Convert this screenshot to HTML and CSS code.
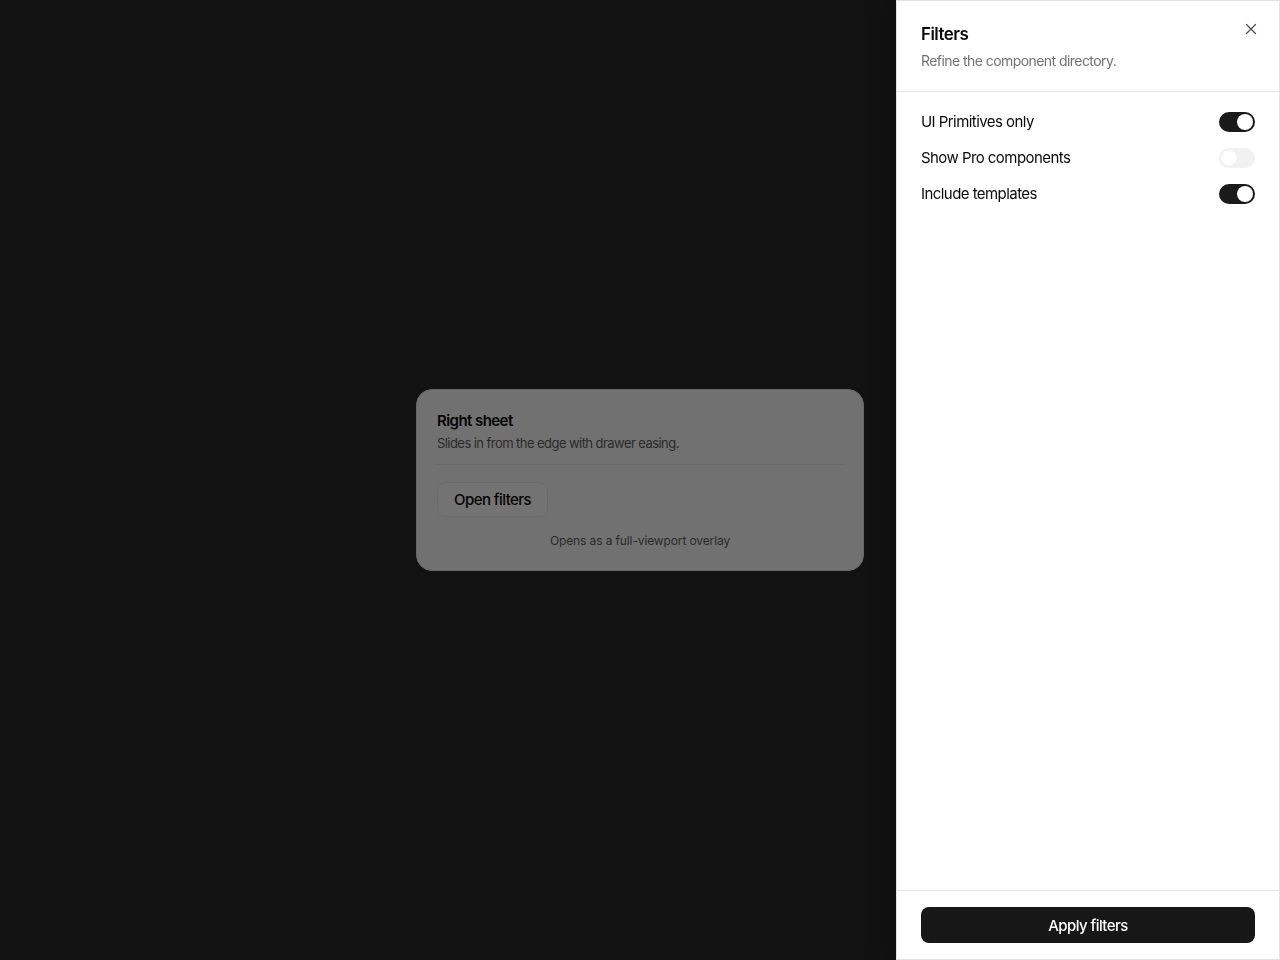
FILE: index.html
```html
<!DOCTYPE html>
<html lang="en">
<head>
<meta charset="utf-8">
<title>Right sheet</title>
<link rel="stylesheet" href="styles.css">
</head>
<body>
<main class="page">
  <section class="card">
    <h2 class="card-title">Right sheet</h2>
    <p class="card-desc">Slides in from the edge with drawer easing.</p>
    <hr class="card-sep">
    <button class="btn-outline" type="button">Open filters</button>
    <p class="card-note">Opens as a full-viewport overlay</p>
  </section>
</main>
<div class="overlay"></div>
<aside class="sheet">
  <header class="sheet-header">
    <h1 class="sheet-title">Filters</h1>
    <p class="sheet-desc">Refine the component directory.</p>
    <button class="close" type="button" aria-label="Close">
      <svg width="14" height="14" viewBox="0 0 14 14" fill="none" stroke="#525252" stroke-width="1.3" stroke-linecap="round"><path d="M2.5 2.5l9 9M11.5 2.5l-9 9"/></svg>
    </button>
  </header>
  <div class="sheet-body">
    <label class="row"><span>UI Primitives only</span><span class="switch on"><span class="knob"></span></span></label>
    <label class="row"><span>Show Pro components</span><span class="switch"><span class="knob"></span></span></label>
    <label class="row"><span>Include templates</span><span class="switch on"><span class="knob"></span></span></label>
  </div>
  <footer class="sheet-footer">
    <button class="btn-primary" type="button">Apply filters</button>
  </footer>
</aside>
</body>
</html>
```
FILE: styles.css
```css
* { box-sizing: border-box; }
html, body { height: 100%; }
body {
  margin: 0;
  background: #282828;
  font-family: Inter, "Noto Sans", "Liberation Sans", sans-serif;
  letter-spacing: -0.035em;
  color: #0a0a0a;
  overflow: hidden;
}
.page {
  height: 100vh;
  display: flex;
  align-items: center;
  justify-content: center;
}
.card {
  width: 448px;
  background: #fafafa;
  border: 1px solid #e5e5e5;
  border-radius: 16px;
  padding: 20px 20px 21px;
}
.card-title {
  margin: 0;
  font-size: 15px;
  font-weight: 600;
  line-height: 22px;
}
.card-desc {
  margin: 0;
  font-size: 13px;
  line-height: 22px;
  color: #5e5e5e;
}
.card-sep {
  border: 0;
  border-top: 1px solid #e8e8e8;
  margin: 10px 0 17px;
}
.btn-outline {
  font: inherit;
  letter-spacing: inherit;
  font-size: 15px;
  font-weight: 500;
  color: #0a0a0a;
  background: #ffffff;
  border: 1px solid #ececec;
  border-radius: 9px;
  height: 35px;
  padding: 0 16px;
}
.card-note {
  margin: 16px 0 0;
  text-align: center;
  font-size: 12px;
  line-height: 16px;
  color: #5e5e5e;
  letter-spacing: -0.01em;
}
.overlay {
  position: fixed;
  inset: 0;
  background: rgba(0, 0, 0, 0.55);
}
.sheet {
  position: fixed;
  top: 0;
  right: 0;
  bottom: 0;
  width: 384px;
  background: #ffffff;
  border: 1px solid #e2e2e2;
  display: flex;
  flex-direction: column;
  box-shadow: -8px 0 24px rgba(0, 0, 0, 0.25);
}
.sheet-header {
  position: relative;
  padding: 21px 24px 20px;
  border-bottom: 1px solid #e5e5e5;
}
.sheet-title {
  margin: 0;
  font-size: 17px;
  font-weight: 600;
  line-height: 24px;
}
.sheet-desc {
  margin: 5px 0 0;
  font-size: 14px;
  line-height: 20px;
  color: #737373;
}
.close {
  position: absolute;
  top: 20px;
  right: 20px;
  width: 16px;
  height: 16px;
  padding: 0;
  border: 0;
  background: none;
  display: flex;
  align-items: center;
  justify-content: center;
}
.sheet-body {
  flex: 1;
  padding: 20px 24px;
  display: flex;
  flex-direction: column;
  gap: 16px;
}
.row {
  display: flex;
  align-items: center;
  justify-content: space-between;
  font-size: 15px;
  line-height: 20px;
  color: #0a0a0a;
}
.switch {
  position: relative;
  width: 36px;
  height: 20px;
  border-radius: 10px;
  background: #f1f1f1;
  flex: none;
}
.switch .knob {
  position: absolute;
  top: 2px;
  left: 2px;
  width: 16px;
  height: 16px;
  border-radius: 50%;
  background: #fff;
  box-shadow: 0 0 1px rgba(0,0,0,0.12);
}
.switch.on { background: #1a1a1a; }
.switch.on .knob { left: 18px; }
.sheet-footer {
  border-top: 1px solid #e5e5e5;
  padding: 16px 24px 16px;
}
.btn-primary {
  width: 100%;
  height: 36px;
  border: 0;
  border-radius: 8px;
  background: #171717;
  color: #fff;
  font: inherit;
  letter-spacing: inherit;
  font-size: 15px;
  font-weight: 500;
}
```
